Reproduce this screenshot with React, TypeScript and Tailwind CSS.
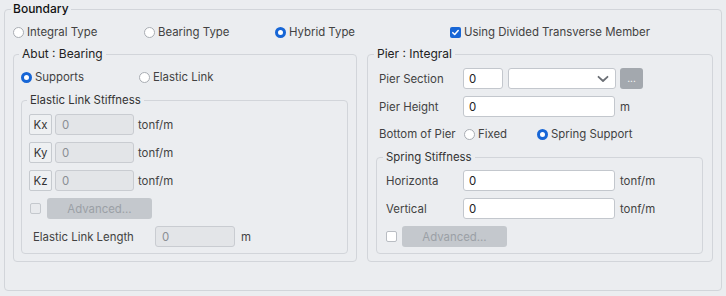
import React from "react";

function Radio({ checked }: { checked?: boolean }) {
  return checked ? (
    <span className="box-border inline-block w-[11px] h-[11px] rounded-full border-[3px] border-[#1766d6] bg-white shrink-0" />
  ) : (
    <span className="box-border inline-block w-[11px] h-[11px] rounded-full border border-[#a9adb3] bg-white shrink-0" />
  );
}

function CheckBox({ checked, white }: { checked?: boolean; white?: boolean }) {
  return checked ? (
    <span className="box-border inline-flex items-center justify-center w-[11px] h-[11px] rounded-[2px] bg-[#1766d6] shrink-0">
      <svg width="9" height="9" viewBox="0 0 10 10">
        <path d="M2 5.2 L4.1 7.2 L8 2.8" fill="none" stroke="white" strokeWidth="1.7" strokeLinecap="round" strokeLinejoin="round" />
      </svg>
    </span>
  ) : white ? (
    <span className="box-border inline-block w-[11px] h-[11px] rounded-[2px] border border-[#b9bdc3] bg-white shrink-0" />
  ) : (
    <span className="box-border inline-block w-[11px] h-[11px] rounded-[2px] border border-[#c4c8cd] bg-[#e8eaed] shrink-0" />
  );
}

function WhiteInput({ w, value = "0" }: { w: string; value?: string }) {
  return (
    <div className={`${w} h-[21px] box-border border border-[#c3c7cd] rounded-[3px] bg-white flex items-center pl-[5px] text-[#222]`}>
      {value}
    </div>
  );
}

function DisabledInput({ w }: { w: string }) {
  return (
    <div className={`${w} h-[21px] box-border border border-[#c9ccd1] rounded-[3px] bg-[#e3e5e8] flex items-center pl-[6px] text-[#8a8e94]`}>
      0
    </div>
  );
}

function AdvButton() {
  return (
    <div className="w-[105px] h-[21px] rounded-[3px] bg-[#c4c8cd] flex items-center justify-center text-[#9ba0a6]">
      Advanced...
    </div>
  );
}

function KRow({ k, mt }: { k: string; mt: string }) {
  return (
    <div className={`flex items-center h-[21px] ${mt}`}>
      <div className="w-[23px] h-[21px] box-border border border-[#c6cacf] rounded-[2px] bg-[#eef0f2] flex items-center justify-center text-[#333]">
        {k}
      </div>
      <div className="ml-[3px]">
        <DisabledInput w="w-[79px]" />
      </div>
      <span className="ml-[4px]">tonf/m</span>
    </div>
  );
}

export default function App() {
  return (
    <div className="w-[726px] h-[296px] bg-[#ebedf0] pt-px pl-1 font-['Inter','Liberation_Sans',sans-serif] text-[11.4px] leading-[16px] text-[#424242] overflow-hidden">
      <fieldset className="w-[718px] h-[290px] box-border border border-[#d2d5da] rounded-[4px] px-2 m-0">
        <legend className="-ml-[2px] px-[2px] leading-[16px] text-[12px] font-medium text-[#111]">Boundary</legend>

        <div className="flex items-center h-4 mt-[7px]">
          <div className="w-[131px] flex items-center gap-[3px]">
            <Radio />
            <span>Integral Type</span>
          </div>
          <div className="w-[131px] flex items-center gap-[3px]">
            <Radio />
            <span>Bearing Type</span>
          </div>
          <div className="w-[175px] flex items-center gap-[3px]">
            <Radio checked />
            <span>Hybrid Type</span>
          </div>
          <div className="flex items-center gap-[3px]">
            <CheckBox checked />
            <span>Using Divided Transverse Member</span>
          </div>
        </div>

        <div className="flex gap-[10px] mt-[6px]">
          {/* Left */}
          <fieldset className="w-[344px] h-[216px] box-border border border-[#d2d5da] rounded-[4px] pl-[7px] m-0">
            <legend className="-ml-[2px] px-[3px] leading-[16px] text-[12px] text-[#222]">Abut : Bearing</legend>
            <div className="flex items-center h-4 mt-[7px]">
              <div className="w-[118px] flex items-center gap-[3px]">
                <Radio checked />
                <span>Supports</span>
              </div>
              <div className="flex items-center gap-[3px]">
                <Radio />
                <span>Elastic Link</span>
              </div>
            </div>
            <fieldset className="w-[327px] h-[162px] box-border border border-[#d2d5da] rounded-[4px] pl-[7px] m-0 mt-[7px]">
              <legend className="-ml-[2px] px-[3px] leading-[16px] text-[#333]">Elastic Link Stiffness</legend>
              <KRow k="Kx" mt="mt-[6px]" />
              <KRow k="Ky" mt="mt-[7px]" />
              <KRow k="Kz" mt="mt-[7px]" />
              <div className="flex items-center mt-[7px] h-[21px]">
                <span className="ml-[1px] flex">
                  <CheckBox />
                </span>
                <span className="ml-[6px]">
                  <AdvButton />
                </span>
              </div>
              <div className="flex items-center mt-[7px] h-[21px]">
                <span className="ml-[4px] w-[122px]">Elastic Link Length</span>
                <DisabledInput w="w-[80px]" />
                <span className="ml-[6px]">m</span>
              </div>
            </fieldset>
          </fieldset>

          {/* Right */}
          <fieldset className="w-[346px] h-[216px] box-border border border-[#d2d5da] rounded-[4px] pl-[8px] m-0">
            <legend className="-ml-[2px] px-[3px] leading-[16px] text-[12px] text-[#222]">Pier : Integral</legend>
            <div className="flex items-center h-[21px] mt-[6px]">
              <span className="w-[87px] pl-[3px]">Pier Section</span>
              <WhiteInput w="w-[40px]" />
              <div className="ml-[5px] w-[108px] h-[21px] box-border border border-[#c3c7cd] rounded-[3px] bg-white flex items-center justify-end pr-[6px]">
                <svg width="12" height="8" viewBox="0 0 12 8">
                  <path d="M1.5 1.8 L6 6 L10.5 1.8" fill="none" stroke="#6b6f75" strokeWidth="1.8" strokeLinecap="round" strokeLinejoin="round" />
                </svg>
              </div>
              <div className="ml-[4px] w-[23px] h-[21px] rounded-[3px] bg-[#a3a8ae] flex items-center justify-center text-white text-[10px] leading-none pb-[2px]">
                ...
              </div>
            </div>
            <div className="flex items-center h-[21px] mt-[7px]">
              <span className="w-[87px] pl-[3px]">Pier Height</span>
              <WhiteInput w="w-[152px]" />
              <span className="ml-[5px]">m</span>
            </div>
            <div className="flex items-center h-4 mt-[9px]">
              <span className="w-[87px] pl-[3px]">Bottom of Pier</span>
              <div className="w-[74px] flex items-center gap-[3px] pl-[1px]">
                <Radio />
                <span>Fixed</span>
              </div>
              <div className="flex items-center gap-[3px]">
                <Radio checked />
                <span>Spring Support</span>
              </div>
            </div>
            <fieldset className="w-[327px] h-[105px] box-border border border-[#d2d5da] rounded-[4px] pl-[9px] m-0 mt-[7px]">
              <legend className="-ml-[3px] px-[3px] leading-[16px] text-[#333]">Spring Stiffness</legend>
              <div className="flex items-center h-[21px] mt-[5px]">
                <span className="w-[77px]">Horizonta</span>
                <WhiteInput w="w-[152px]" />
                <span className="ml-[5px]">tonf/m</span>
              </div>
              <div className="flex items-center h-[21px] mt-[7px]">
                <span className="w-[77px]">Vertical</span>
                <WhiteInput w="w-[152px]" />
                <span className="ml-[5px]">tonf/m</span>
              </div>
              <div className="flex items-center h-[21px] mt-[7px]">
                <CheckBox white />
                <span className="ml-[5px]">
                  <AdvButton />
                </span>
              </div>
            </fieldset>
          </fieldset>
        </div>
      </fieldset>
    </div>
  );
}
